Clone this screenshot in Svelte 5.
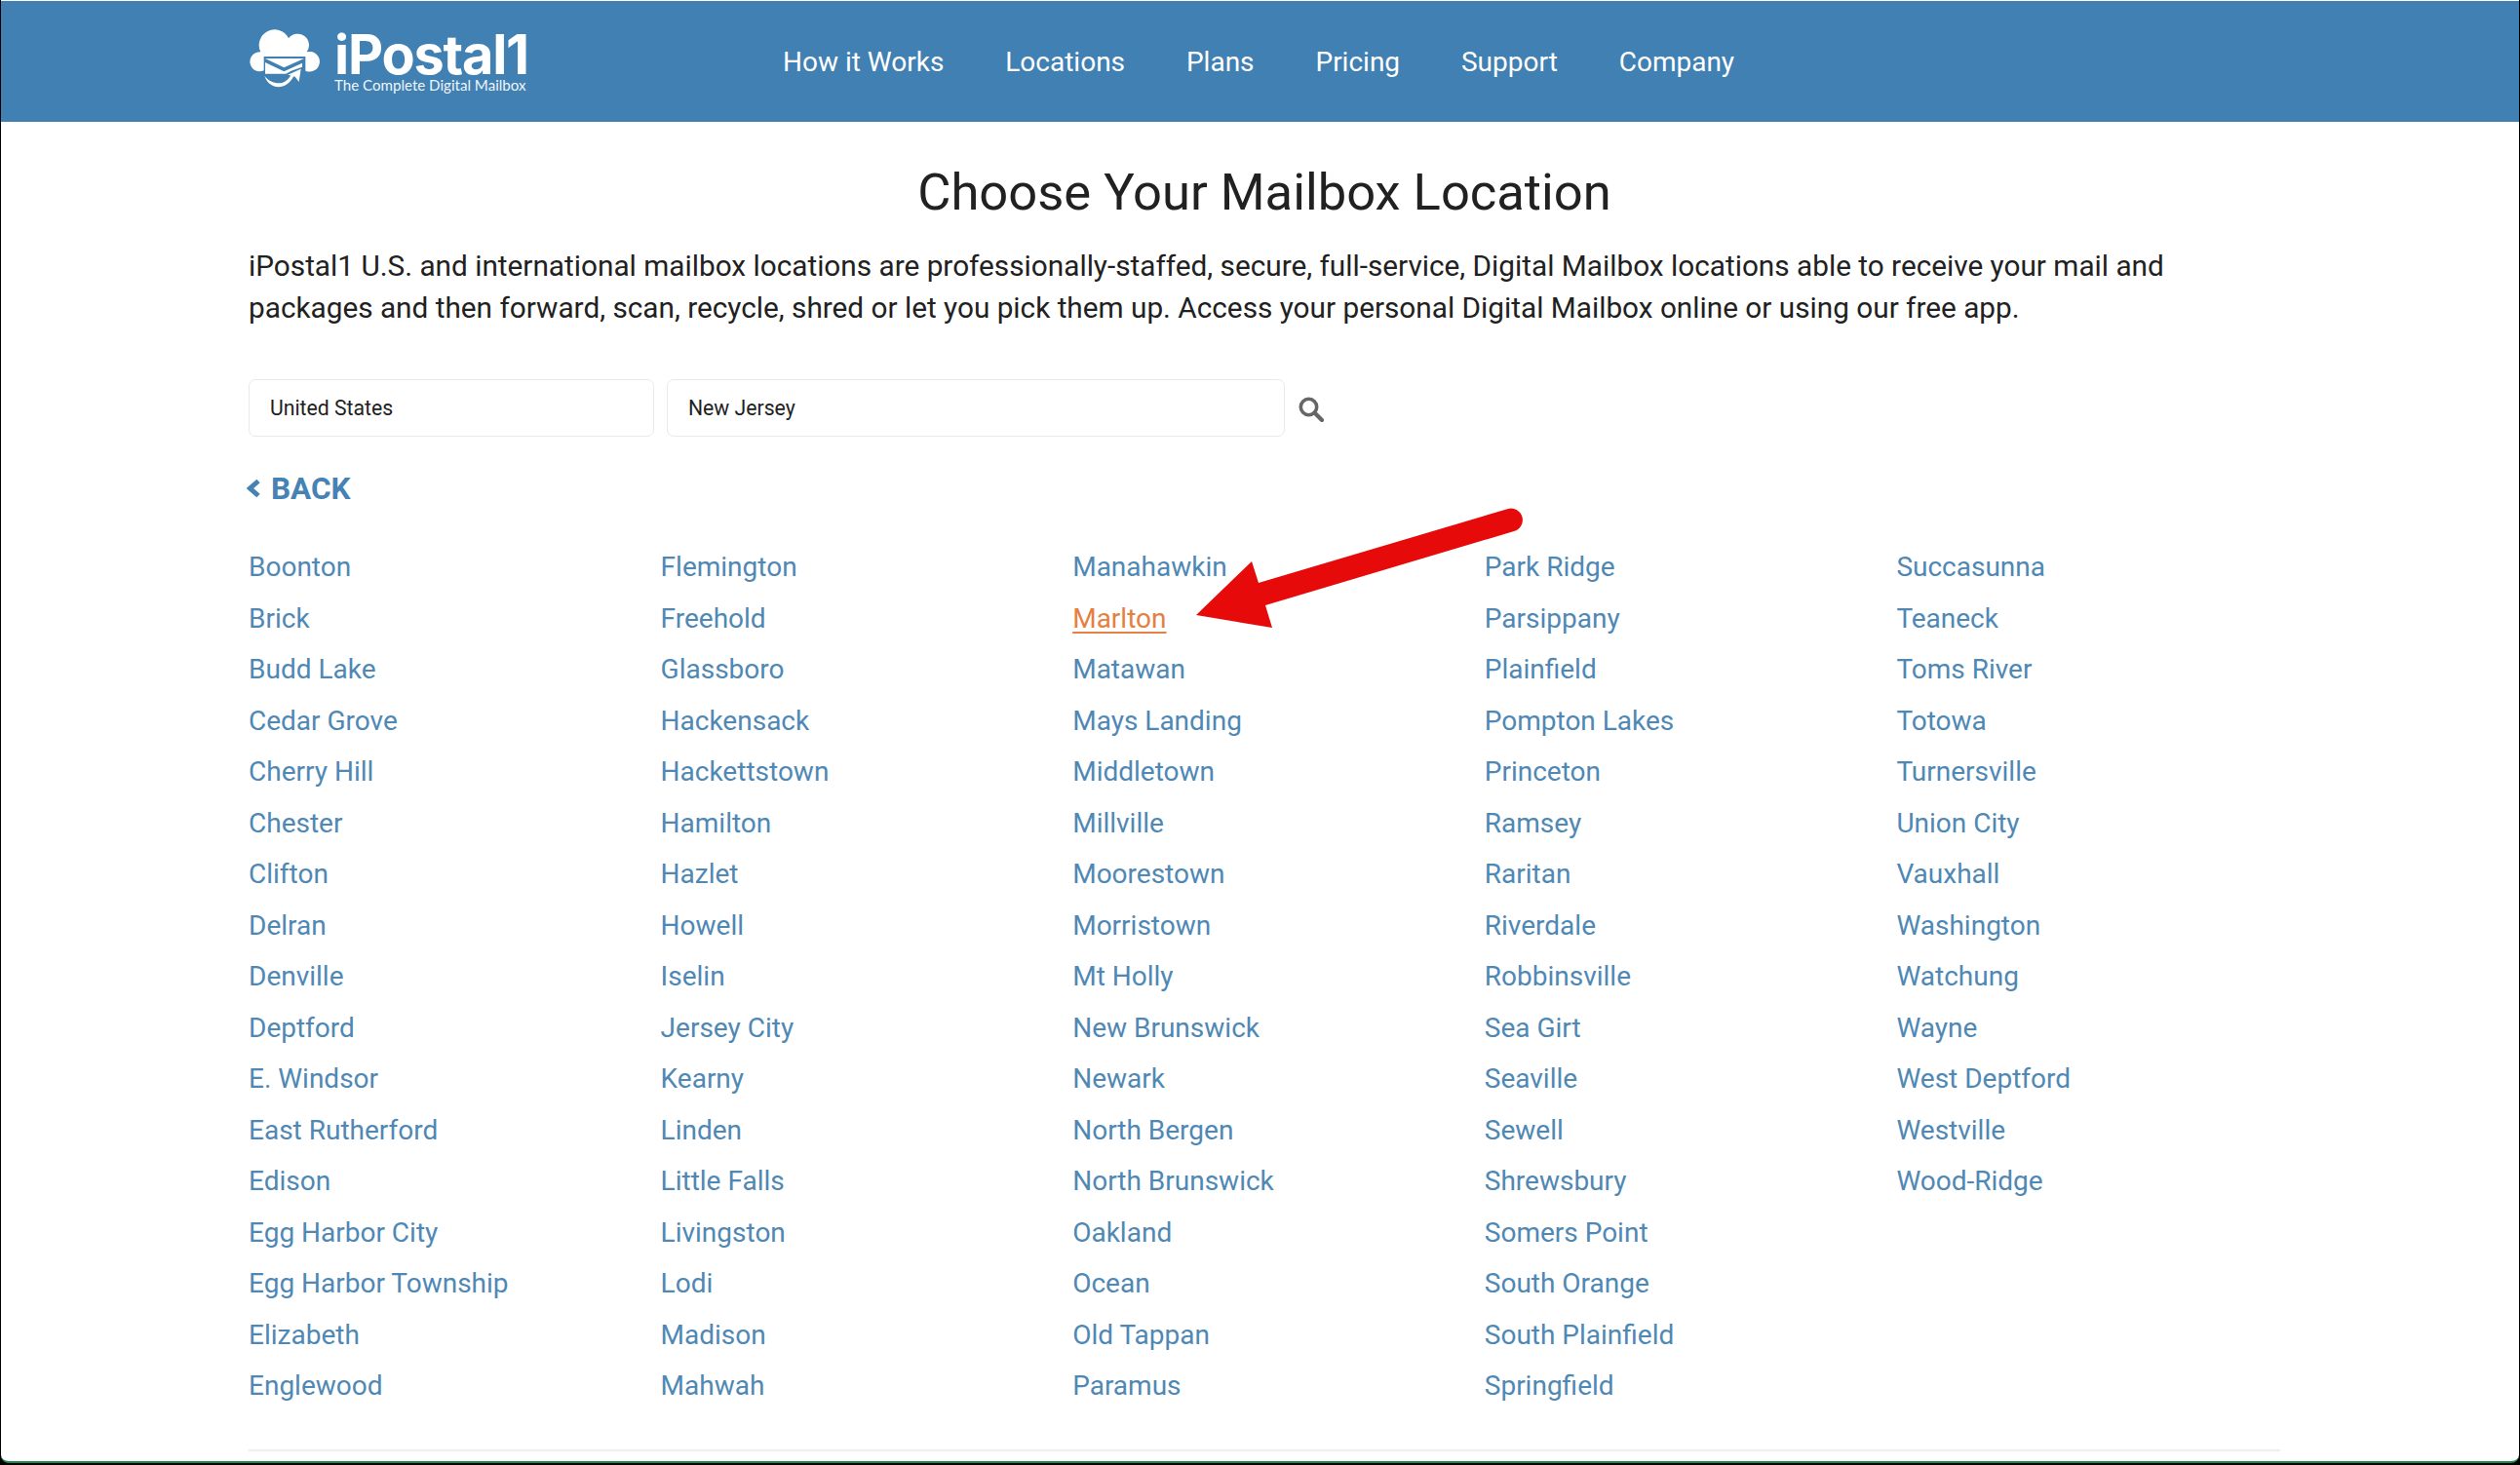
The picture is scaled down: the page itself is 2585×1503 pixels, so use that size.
<script>
  const columns = [
    ['Boonton','Brick','Budd Lake','Cedar Grove','Cherry Hill','Chester','Clifton','Delran','Denville','Deptford','E. Windsor','East Rutherford','Edison','Egg Harbor City','Egg Harbor Township','Elizabeth','Englewood'],
    ['Flemington','Freehold','Glassboro','Hackensack','Hackettstown','Hamilton','Hazlet','Howell','Iselin','Jersey City','Kearny','Linden','Little Falls','Livingston','Lodi','Madison','Mahwah'],
    ['Manahawkin','Marlton','Matawan','Mays Landing','Middletown','Millville','Moorestown','Morristown','Mt Holly','New Brunswick','Newark','North Bergen','North Brunswick','Oakland','Ocean','Old Tappan','Paramus'],
    ['Park Ridge','Parsippany','Plainfield','Pompton Lakes','Princeton','Ramsey','Raritan','Riverdale','Robbinsville','Sea Girt','Seaville','Sewell','Shrewsbury','Somers Point','South Orange','South Plainfield','Springfield'],
    ['Succasunna','Teaneck','Toms River','Totowa','Turnersville','Union City','Vauxhall','Washington','Watchung','Wayne','West Deptford','Westville','Wood-Ridge']
  ];
  const nav = ['How it Works','Locations','Plans','Pricing','Support','Company'];
</script>

<div class="frame">
  <header class="top">
    <div class="brand">
      <svg class="mark" viewBox="0 0 255 195" width="85" height="65" aria-hidden="true">
        <path fill="#fff" d="M62 133A30 30 0 1 1 52 76A46 46 0 0 1 138 34A31 31 0 0 1 194 76A31 31 0 1 1 190 134V90H62Z"/>
        <path fill="#fff" d="M66 96H186L124 124Z"/>
        <path fill="#fff" d="M66 108L124 136L180 110V122L146 134L130 143H66Z"/>
        <path fill="#fff" d="M64 150C78 192 130 198 154 150L146 146C128 180 90 180 64 150Z"/>
        <path fill="#fff" d="M136 146L176 128L170 168L158 152Z"/>
      </svg>
      <div class="wordmark">
        <div class="name">iPostal1</div>
        <div class="tag">The Complete Digital Mailbox</div>
      </div>
    </div>
    <nav class="menu">
      {#each nav as item}<a href="#top">{item}</a>{/each}
    </nav>
  </header>

  <main class="content">
    <h1>Choose Your Mailbox Location</h1>
    <p class="lede">iPostal1 U.S. and international mailbox locations are professionally-staffed, secure, full-service, Digital Mailbox locations able to receive your mail and packages and then forward, scan, recycle, shred or let you pick them up. Access your personal Digital Mailbox online or using our free app.</p>

    <div class="filters">
      <div class="select country">United States</div>
      <div class="select region">New Jersey</div>
      <svg class="search" viewBox="0 0 26 26" width="26" height="26" aria-hidden="true">
        <circle cx="10.5" cy="10.5" r="8.2" fill="none" stroke="#666" stroke-width="3.6"/>
        <path d="M16.5 16.5l7.5 7.5" stroke="#666" stroke-width="4.2" stroke-linecap="round"/>
      </svg>
    </div>

    <a class="back" href="#top">
      <svg viewBox="0 0 15 20" width="15" height="20" aria-hidden="true"><path d="M13 2.5L4.5 10l8.5 7.5" fill="none" stroke="#4682b4" stroke-width="5"/></svg>
      BACK
    </a>

    <div class="grid">
      {#each columns as col}
        <ul>
          {#each col as city}
            <li><a href="#top" class:active={city === 'Marlton'}>{city}</a></li>
          {/each}
        </ul>
      {/each}
    </div>
    <div class="rule"></div>
  </main>

  <svg class="arrow" viewBox="0 0 2585 1503" aria-hidden="true">
    <path fill="#e60a0a" d="M1227 631L1284 576L1291 598L1547 522A11.7 11.7 0 0 1 1553 545L1298 621L1305 644Z"/>
  </svg>
</div>

<style>
  :global(body) { margin: 0; background: #000; }
  .frame {
    position: relative;
    width: 2583px;
    height: 1501px;
    margin-left: 1px;
    padding-top: 1px;
    background: #fff;
    border-bottom: 2px solid #1f8a4c;
    border-radius: 0 0 8px 8px;
    box-sizing: border-box;
    overflow: hidden;
    font-family: Roboto, "Liberation Sans", sans-serif;
    color: #212121;
  }
  .top {
    height: 124px;
    background: #4080b3;
    display: flex;
    align-items: center;
    padding-left: 249px;
    box-sizing: border-box;
  }
  .brand { display: flex; align-items: flex-start; gap: 8px; width: 553px; }
  .mark { display: block; margin-top: -3px; }
  .wordmark { color: #fff; width: 200px; }
  .name {
    font-family: Inter, sans-serif;
    font-weight: 700;
    font-size: 55.8px;
    line-height: 50px;
    letter-spacing: -1.2px;
    white-space: nowrap;
  }
  .tag {
    font-family: Lato, sans-serif;
    font-size: 15.1px;
    line-height: 16px;
    margin-top: -2px;
    white-space: nowrap;
    opacity: .92;
  }
  .menu { display: flex; gap: 62.9px; padding-top: 1px; }
  .menu a { color: #fff; text-decoration: none; font-size: 28px; line-height: 32px; }
  .content { padding: 0 254px; }
  h1 {
    margin: 41px 0 0;
    font-weight: 400;
    font-size: 52.5px;
    line-height: 62px;
    text-align: center;
    width: 2084px;
  }
  .lede {
    margin: 23px 0 0;
    font-size: 29.75px;
    line-height: 43px;
    width: 2000px;
  }
  .filters { display: flex; align-items: center; margin-top: 52px; }
  .select {
    height: 59px;
    box-sizing: border-box;
    border: 1px solid #e9e9e9;
    border-radius: 7px;
    padding-left: 21px;
    font-size: 21.2px;
    line-height: 58px;
  }
  .country { width: 416px; margin-right: 13px; }
  .region { width: 634px; margin-right: 14px; }
  .search { display: block; margin-top: 3px; }
  .back {
    display: flex;
    align-items: center;
    gap: 11px;
    margin: 33px 0 0 -3px;
    height: 40px;
    color: #4682b4;
    font-weight: 700;
    font-size: 31.5px;
    text-decoration: none;
  }
  .grid { display: flex; margin-top: 35px; }
  ul { list-style: none; margin: 0; padding: 0; width: 422.6px; flex: none; }
  li { height: 52.5px; line-height: 52.5px; font-size: 28px; }
  li a { color: #4f88b4; text-decoration: none; }
  li a.active { color: #e57f42; text-decoration: underline; text-underline-offset: 4px; }
  .rule { height: 2px; background: #eee; margin-top: 38px; width: 2084px; }
  .arrow { position: absolute; left: -1px; top: 0; width: 2585px; height: 1503px; pointer-events: none; }
</style>
